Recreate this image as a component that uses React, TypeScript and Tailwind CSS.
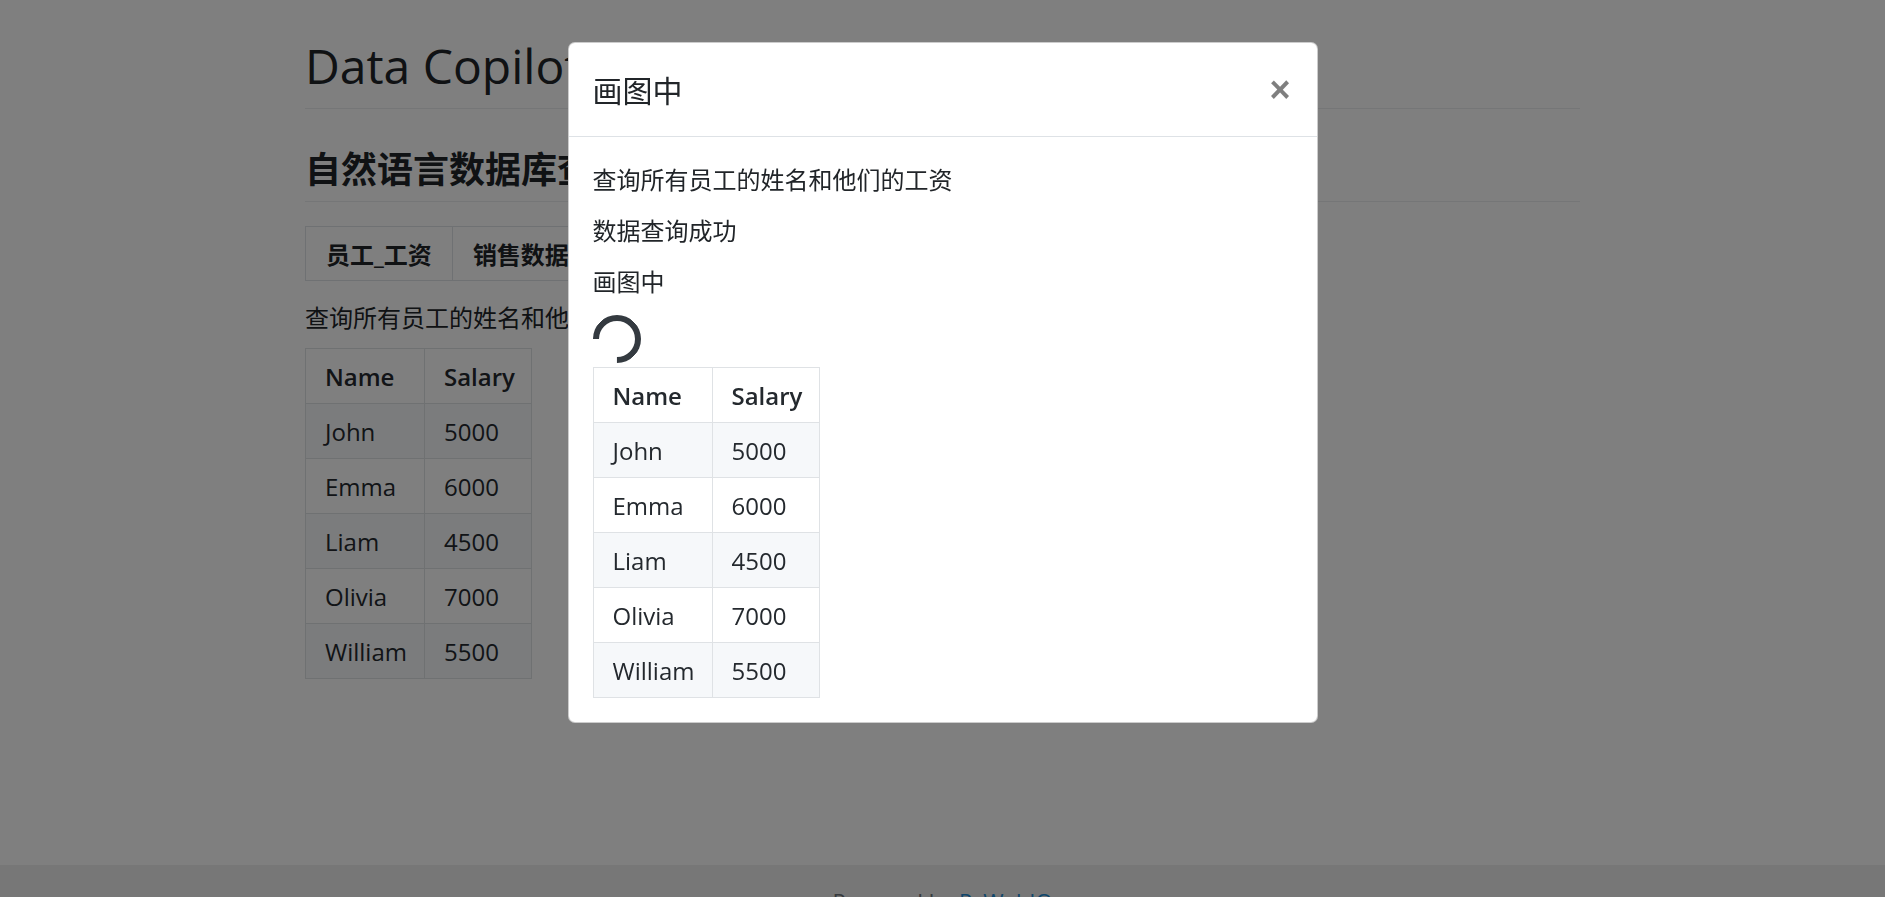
import React from "react";

const rows = [
  ["John", "5000"],
  ["Emma", "6000"],
  ["Liam", "4500"],
  ["Olivia", "7000"],
  ["William", "5500"],
];

const SalaryTable = () => {
  return (
    <table className="w-[226px] table-fixed border-collapse text-[24px] leading-[36px] text-[#24292e]">
      <colgroup>
        <col className="w-[119px]" />
        <col className="w-[107px]" />
      </colgroup>
      <tbody>
        <tr className="bg-white">
          <th className="border border-[#dfe2e5] px-[19px] pt-[10px] pb-[8px] text-left font-semibold">Name</th>
          <th className="border border-[#dfe2e5] px-[19px] pt-[10px] pb-[8px] text-left font-semibold">Salary</th>
        </tr>
        {rows.map(([name, salary], i) => (
          <tr key={name} className={i % 2 === 0 ? "bg-[#f6f8fa]" : "bg-white"}>
            <td className="border border-[#dfe2e5] px-[19px] pt-[10px] pb-[8px] whitespace-nowrap">{name}</td>
            <td className="border border-[#dfe2e5] px-[19px] pt-[10px] pb-[8px] whitespace-nowrap">{salary}</td>
          </tr>
        ))}
      </tbody>
    </table>
  );
};

export default function App() {
  return (
    <div className="min-h-screen bg-white font-['Open_Sans','Noto_Sans_CJK_SC',sans-serif] text-[#212529]">
      {/* page under the modal */}
      <div className="mx-auto max-w-[1320px] px-[22.5px] pt-[36px]">
        <h1 className="border-b border-[#eaecef] pb-[12px] text-[48px] leading-[60px] font-medium">Data Copilot</h1>
        <h2 className="mt-[38px] border-b border-[#eaecef] pb-[9px] text-[36px] leading-[45px] font-bold">
          自然语言数据库查询
        </h2>

        <div className="mt-[24px] flex w-max border border-[#dee2e6]">
          <div className="flex h-[53px] items-center border-r border-[#dee2e6] px-[20px] pt-[2px] text-[24px] font-bold">
            员工_工资
          </div>
          <div className="flex h-[53px] items-center px-[20px] pt-[2px] text-[24px] font-bold">销售数据</div>
        </div>

        <p className="mt-[19px] mb-[12px] text-[24px] leading-[36px]">查询所有员工的姓名和他们的工资</p>

        <SalaryTable />
      </div>

      <footer className="mt-[186px] h-[120px] bg-[#eeeeee] pt-[20px] text-center text-[22px] leading-[32px] text-[#6c757d]">
        Powered by <span className="text-[#1f8dd6]">PyWebIO</span>
      </footer>

      {/* backdrop */}
      <div className="fixed inset-0 bg-black/50" />

      {/* modal */}
      <div className="fixed inset-0 overflow-auto">
        <div className="mx-auto mt-[42px] w-[750px] rounded-[7px] border border-black/20 bg-white">
          <div className="flex items-center justify-between border-b border-[#dee2e6] p-[24px]">
            <h5 className="pt-[2px] text-[30px] leading-[43px] font-normal">画图中</h5>
            <button className="mr-[2px] font-['Liberation_Sans',sans-serif] text-[36px] leading-none font-bold text-black/50">
              ×
            </button>
          </div>
          <div className="p-[24px] text-[24px] leading-[36px]">
            <p className="mt-[1px] mb-[15px]">查询所有员工的姓名和他们的工资</p>
            <p className="mb-[15px]">数据查询成功</p>
            <p>画图中</p>
            <div className="mt-[15px] h-[48px] w-[48px] rotate-[135deg] rounded-full border-[6px] border-[#343a40] border-r-transparent" />
            <div className="mt-[4px]">
              <SalaryTable />
            </div>
          </div>
        </div>
      </div>
    </div>
  );
}
